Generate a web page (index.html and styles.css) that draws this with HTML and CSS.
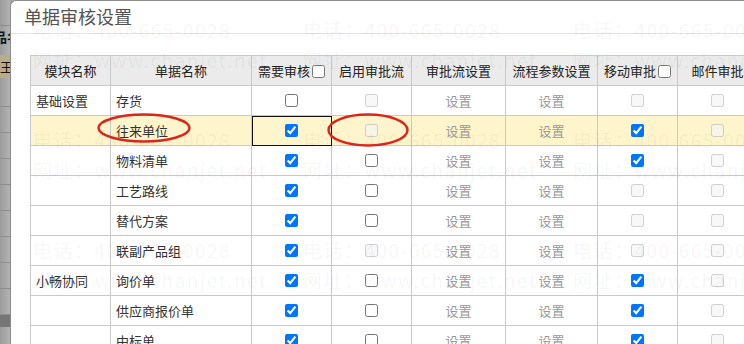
FILE: index.html
```html
<!DOCTYPE html>
<html lang="zh-CN">
<head>
  <meta charset="UTF-8">
  <title>单据审核设置</title>
  <link rel="stylesheet" href="styles.css">
</head>
<body>
  <div class="screen">
    <!-- abgedunkelte Seite hinter dem Dialog -->
    <div class="backdrop">
      <div class="bd-top"></div>
      <div class="bd-head">品名</div>
      <div class="bd-sel">王</div>
      <div class="bd-row bd-first"></div>
      <div class="bd-row"></div>
      <div class="bd-row"></div>
      <div class="bd-row"></div>
      <div class="bd-row"></div>
      <div class="bd-row"></div>
      <div class="bd-row"></div>
      <div class="bd-row"></div>
      <div class="bd-row"></div>
      <div class="bd-dark"></div>
    </div>

    <div class="dialog">
      <div class="dialog-title">单据审核设置</div>
      <div class="dialog-body">
        <table class="audit-table">
          <colgroup>
            <col style="width:80px"><col style="width:141px"><col style="width:80px"><col style="width:80px">
            <col style="width:94px"><col style="width:92px"><col style="width:80px"><col style="width:80px">
          </colgroup>
          <thead>
            <tr>
              <th>模块名称</th>
              <th>单据名称</th>
              <th>需要审核<input type="checkbox" class="head-check"></th>
              <th>启用审批流</th>
              <th>审批流设置</th>
              <th>流程参数设置</th>
              <th>移动审批<input type="checkbox" class="head-check"></th>
              <th>邮件审批</th>
            </tr>
          </thead>
          <tbody>
            <tr>
              <td>基础设置</td><td>存货</td>
              <td class="check-cell"><input type="checkbox"></td>
              <td class="check-cell"><input type="checkbox" disabled></td>
              <td class="link-off">设置</td><td class="link-off">设置</td>
              <td class="check-cell"><input type="checkbox" disabled></td>
              <td class="check-cell"><input type="checkbox" disabled></td>
            </tr>
            <tr class="current">
              <td></td><td>往来单位</td>
              <td class="check-cell cell-focus"><input type="checkbox" checked></td>
              <td class="check-cell"><input type="checkbox" disabled></td>
              <td class="link-off">设置</td><td class="link-off">设置</td>
              <td class="check-cell"><input type="checkbox" checked></td>
              <td class="check-cell"><input type="checkbox" disabled></td>
            </tr>
            <tr>
              <td></td><td>物料清单</td>
              <td class="check-cell"><input type="checkbox" checked></td>
              <td class="check-cell"><input type="checkbox"></td>
              <td class="link-off">设置</td><td class="link-off">设置</td>
              <td class="check-cell"><input type="checkbox" checked></td>
              <td class="check-cell"><input type="checkbox" disabled></td>
            </tr>
            <tr>
              <td></td><td>工艺路线</td>
              <td class="check-cell"><input type="checkbox" checked></td>
              <td class="check-cell"><input type="checkbox"></td>
              <td class="link-off">设置</td><td class="link-off">设置</td>
              <td class="check-cell"><input type="checkbox" disabled></td>
              <td class="check-cell"><input type="checkbox" disabled></td>
            </tr>
            <tr>
              <td></td><td>替代方案</td>
              <td class="check-cell"><input type="checkbox" checked></td>
              <td class="check-cell"><input type="checkbox"></td>
              <td class="link-off">设置</td><td class="link-off">设置</td>
              <td class="check-cell"><input type="checkbox" disabled></td>
              <td class="check-cell"><input type="checkbox" disabled></td>
            </tr>
            <tr>
              <td></td><td>联副产品组</td>
              <td class="check-cell"><input type="checkbox" checked></td>
              <td class="check-cell"><input type="checkbox" disabled></td>
              <td class="link-off">设置</td><td class="link-off">设置</td>
              <td class="check-cell"><input type="checkbox" disabled></td>
              <td class="check-cell"><input type="checkbox" disabled></td>
            </tr>
            <tr>
              <td>小畅协同</td><td>询价单</td>
              <td class="check-cell"><input type="checkbox" checked></td>
              <td class="check-cell"><input type="checkbox"></td>
              <td class="link-off">设置</td><td class="link-off">设置</td>
              <td class="check-cell"><input type="checkbox" checked></td>
              <td class="check-cell"><input type="checkbox" disabled></td>
            </tr>
            <tr>
              <td></td><td>供应商报价单</td>
              <td class="check-cell"><input type="checkbox" checked></td>
              <td class="check-cell"><input type="checkbox"></td>
              <td class="link-off">设置</td><td class="link-off">设置</td>
              <td class="check-cell"><input type="checkbox" checked></td>
              <td class="check-cell"><input type="checkbox" disabled></td>
            </tr>
            <tr>
              <td></td><td>中标单</td>
              <td class="check-cell"><input type="checkbox" checked></td>
              <td class="check-cell"><input type="checkbox"></td>
              <td class="link-off">设置</td><td class="link-off">设置</td>
              <td class="check-cell"><input type="checkbox" checked></td>
              <td class="check-cell"><input type="checkbox" disabled></td>
            </tr>
          </tbody>
        </table>
      </div>

      <!-- Wasserzeichen über dem Dialog -->
      <div class="watermark">
        <div class="wm"><div>电话：400-665-0028</div><div>网址：www.chanjet.net</div></div>
        <div class="wm"><div>电话：400-665-0028</div><div>网址：www.chanjet.net</div></div>
        <div class="wm"><div>电话：400-665-0028</div><div>网址：www.chanjet.net</div></div>
        <div class="wm"><div>电话：400-665-0028</div><div>网址：www.chanjet.net</div></div>
        <div class="wm"><div>电话：400-665-0028</div><div>网址：www.chanjet.net</div></div>
        <div class="wm"><div>电话：400-665-0028</div><div>网址：www.chanjet.net</div></div>
        <div class="wm"><div>电话：400-665-0028</div><div>网址：www.chanjet.net</div></div>
        <div class="wm"><div>电话：400-665-0028</div><div>网址：www.chanjet.net</div></div>
        <div class="wm"><div>电话：400-665-0028</div><div>网址：www.chanjet.net</div></div>
      </div>

      <!-- rote Markierungen -->
      <svg class="mark mark-name" width="94" height="30" viewBox="0 0 94 30">
        <ellipse cx="47" cy="15" rx="45.5" ry="13.5"></ellipse>
      </svg>
      <svg class="mark mark-flow" width="82" height="34" viewBox="0 0 82 34">
        <ellipse cx="41" cy="17" rx="39.5" ry="15.5"></ellipse>
      </svg>
    </div>
  </div>
</body>
</html>
```

FILE: styles.css
```css
* { box-sizing: border-box; }
html, body { margin: 0; padding: 0; }
body {
  font-family: "Noto Sans CJK SC", sans-serif;
  font-size: 13px;
  color: #333;
  background: #a4a4a4;
  overflow: hidden;
}
.screen {
  display: flex;
  height: 344px;
}

/* Hintergrundseite */
.backdrop {
  width: 10px;
  flex: none;
  overflow: hidden;
  background: linear-gradient(to right, #9c9c9c, #b3b3b3);
  font-weight: bold;
  color: #111;
  white-space: nowrap;
}
.bd-top { height: 26px; border-bottom: 1px solid #8a8a8a; }
.bd-head {
  height: 29px;
  padding-top: 3px;
  line-height: 16px;
  margin-left: -6px;
}
.bd-sel {
  height: 23px;
  line-height: 23px;
  margin-left: -3px;
  padding-left: 3px;
  background: #b8ad86;
  font-weight: normal;
}
.bd-row { height: 26px; border-bottom: 1px solid #8e8e8e; }
.bd-first { height: 29px; }
.bd-dark { height: 12px; background: #767676; }

/* Dialog */
.dialog {
  position: relative;
  flex: 1;
  min-width: 0;
  background: #fff;
  border-top: 1px solid #8c8c8c;
  border-left: 1px solid #8c8c8c;
  border-top-left-radius: 6px;
  overflow: hidden;
}
.dialog-title {
  height: 33px;
  line-height: 31px;
  padding-left: 13px;
  font-size: 18px;
  color: #555;
  border-bottom: 1px solid #e2e2e2;
}
.dialog-body { padding: 21px 0 0 19px; }

/* Tabelle */
.audit-table {
  border-collapse: collapse;
  table-layout: fixed;
  width: 727px;
}
.audit-table th,
.audit-table td {
  height: 30px;
  padding: 0 5px;
  border: 1px solid #c9c9c9;
  white-space: nowrap;
  overflow: hidden;
}
.audit-table th {
  background: #ebebeb;
  font-weight: normal;
  color: #222;
  text-align: center;
}
.head-check {
  margin: 0 0 0 2px;
  width: 13px;
  height: 13px;
  vertical-align: -2px;
}
.check-cell input {
  display: block;
  margin: 0 auto;
  width: 13px;
  height: 13px;
}
.link-off { color: #9a9a9a; text-align: center; }
.audit-table tr.current td { background: #fff5cc; }
.audit-table td.cell-focus {
  outline: 1px solid #111;
  outline-offset: -1px;
}

/* Wasserzeichen */
.watermark {
  position: absolute;
  top: 0;
  left: 0;
  right: 0;
  bottom: 0;
  pointer-events: none;
  display: grid;
  grid-template-columns: repeat(3, 270px);
  grid-auto-rows: 110px;
  padding: 14px 0 0 22px;
  font-size: 19px;
  line-height: 30px;
  letter-spacing: 1.5px;
  color: rgba(0, 0, 0, 0.05);
  white-space: nowrap;
}

/* Markierungen */
.mark {
  position: absolute;
  pointer-events: none;
}
.mark ellipse {
  fill: none;
  stroke: #d9271d;
  stroke-width: 2.5;
}
.mark-name { left: 86px; top: 112px; }
.mark-flow { left: 316px; top: 112px; }
```
